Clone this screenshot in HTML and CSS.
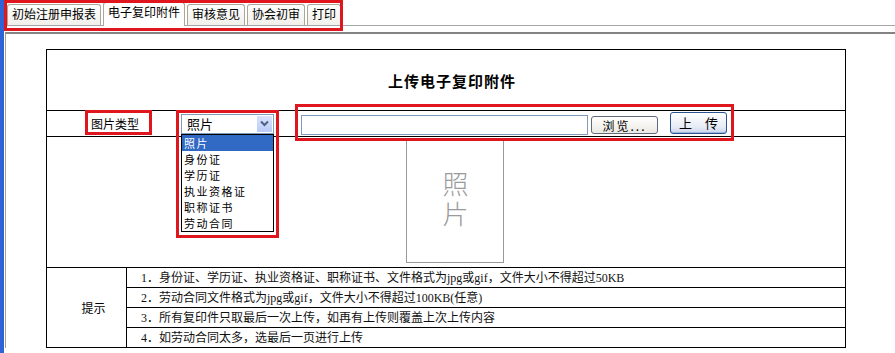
FILE: index.html
```html
<!DOCTYPE html>
<html lang="zh-CN">
<head>
    <meta charset="UTF-8">
    <title>上传电子复印附件</title>
    <link rel="stylesheet" href="styles.css">
</head>
<body>
    <div class="strip"></div>
    <div class="main">
        <div class="tabbar">
            <div class="tabs">
                <span class="tab">初始注册申报表</span>
                <span class="tab active">电子复印附件</span>
                <span class="tab">审核意见</span>
                <span class="tab">协会初审</span>
                <span class="tab">打印</span>
                <div class="mark mark-tabs"></div>
            </div>
        </div>
        <div class="gap"></div>
        <div class="frame">
            <table class="upload">
                <tr>
                    <td colspan="2" class="title">上传电子复印附件</td>
                </tr>
                <tr>
                    <td colspan="2" class="type-row">
                        <div class="type-line">
                            <span class="type-label">图片类型<span class="mark mark-label"></span></span>
                            <div class="sel-wrap">
                                <div class="sel">
                                    <span>照片</span>
                                    <span class="sel-btn">
                                        <svg width="9" height="7" viewBox="0 0 9 7"><path d="M1 1.5 L4.5 5 L8 1.5" fill="none" stroke="#4d6185" stroke-width="2"/></svg>
                                    </span>
                                </div>
                                <ul class="sel-list">
                                    <li class="picked">照片</li>
                                    <li>身份证</li>
                                    <li>学历证</li>
                                    <li>执业资格证</li>
                                    <li>职称证书</li>
                                    <li>劳动合同</li>
                                </ul>
                                <div class="mark mark-sel"></div>
                            </div>
                            <div class="file-group">
                                <span class="file-input"></span>
                                <span class="btn btn-browse">浏览...</span>
                                <span class="btn btn-upload">上　传</span>
                                <div class="mark mark-file"></div>
                            </div>
                        </div>
                    </td>
                </tr>
                <tr>
                    <td colspan="2" class="photo-cell">
                        <div class="photo"><span class="photo-text">照片</span></div>
                    </td>
                </tr>
                <tr>
                    <td rowspan="4" class="tip-head">提示</td>
                    <td class="tip">1．身份证、学历证、执业资格证、职称证书、文件格式为jpg或gif，文件大小不得超过50KB</td>
                </tr>
                <tr>
                    <td class="tip">2．劳动合同文件格式为jpg或gif，文件大小不得超过100KB(任意)</td>
                </tr>
                <tr>
                    <td class="tip">3．所有复印件只取最后一次上传，如再有上传则覆盖上次上传内容</td>
                </tr>
                <tr>
                    <td class="tip">4．如劳动合同太多，选最后一页进行上传</td>
                </tr>
            </table>
        </div>
    </div>
</body>
</html>
```

FILE: styles.css
```css
body {
    margin: 0;
    display: flex;
    min-height: 353px;
    font-family: "Liberation Serif", "Noto Sans CJK SC", serif;
    font-size: 12px;
    color: #000;
    background-color: #fff;
}
.strip {
    width: 4px;
    flex-shrink: 0;
    background-color: #2f64d6;
}
.main {
    flex: 1;
}
.tabbar {
    height: 25px;
    border-bottom: 1px solid #a7a6aa;
    padding-left: 3px;
    display: flex;
    align-items: flex-end;
}
.tabs {
    position: relative;
    display: flex;
    align-items: flex-end;
    gap: 2px;
    margin-bottom: -1px;
}
.tab {
    height: 20px;
    line-height: 17px;
    margin-bottom: 1px;
    padding: 0 4px;
    border: 1px solid #aca899;
    border-bottom: none;
    border-radius: 3px 3px 0 0;
    background: linear-gradient(#fefefe, #f1f0ea);
    font-family: "Noto Sans CJK SC", sans-serif;
    white-space: nowrap;
}
.tab.active {
    height: 23px;
    line-height: 18px;
    margin-bottom: 0;
    background: #fff;
}
.mark {
    position: absolute;
    border: 3px solid #e0161e;
    pointer-events: none;
    z-index: 2;
}
.mark-tabs {
    top: -2px;
    left: -3px;
    right: -2px;
    bottom: -5px;
}
.gap {
    height: 6px;
}
.frame {
    margin-left: 1px;
    border-top: 2px solid #848284;
    border-left: 1px solid #a0a0a0;
    padding: 15px 0 0 40px;
}
.upload {
    border-collapse: collapse;
    width: 800px;
}
.upload td {
    border: 1px solid #000;
    padding: 0;
}
.title {
    height: 60px;
    padding-left: 12px !important;
    text-align: center;
    font-family: "Noto Sans CJK SC", sans-serif;
    font-size: 15px;
    font-weight: bold;
    letter-spacing: 1px;
}
.type-row {
    height: 25px;
}
.type-line {
    display: flex;
    align-items: center;
    height: 25px;
    padding-left: 44px;
    font-family: "Noto Sans CJK SC", sans-serif;
}
.type-label {
    position: relative;
    width: 48px;
    line-height: 19px;
    white-space: nowrap;
}
.mark-label {
    top: -4px;
    left: -6px;
    right: -13px;
    bottom: -2px;
}
.sel-wrap {
    position: relative;
    margin-left: 42px;
}
.sel {
    width: 86px;
    height: 18px;
    padding-left: 5px;
    border: 1px solid #7f9db9;
    display: flex;
    align-items: center;
    justify-content: space-between;
    font-size: 13px;
    background-color: #fff;
}
.sel-btn {
    width: 15px;
    height: 16px;
    margin-right: 1px;
    display: flex;
    align-items: center;
    justify-content: center;
    background: linear-gradient(#d9e3fd, #b9cbf6);
}
.sel-list {
    position: absolute;
    top: 100%;
    left: 0;
    width: 91px;
    margin: 0;
    padding: 0;
    list-style: none;
    border: 1px solid #000;
    background-color: #fff;
    font-size: 11px;
    letter-spacing: 1.5px;
    z-index: 1;
}
.sel-list li {
    height: 16px;
    line-height: 16px;
    padding-left: 2px;
}
.sel-list li.picked {
    background-color: #316ac5;
    color: #fff;
}
.mark-sel {
    top: -4px;
    left: -5px;
    right: -5px;
    bottom: -104px;
}
.file-group {
    position: relative;
    display: flex;
    align-items: flex-start;
    height: 23px;
    margin-left: 27px;
}
.mark-file {
    top: -8px;
    left: -6px;
    right: -7px;
    bottom: -6px;
}
.file-input {
    width: 285px;
    height: 18px;
    margin-top: 3px;
    border: 1px solid #7f9db9;
    background-color: #fff;
}
.btn {
    display: flex;
    align-items: center;
    justify-content: center;
    box-sizing: border-box;
    border-radius: 3px;
    white-space: nowrap;
}
.btn-browse {
    width: 67px;
    height: 18px;
    margin: 4px 0 0 3px;
    border: 1px solid #5e6b7a;
    background: linear-gradient(#ffffff, #ebe9e2);
    letter-spacing: 2px;
}
.btn-upload {
    width: 57px;
    height: 22px;
    margin-left: 12px;
    padding-bottom: 2px;
    border: 1px solid #2a5390;
    background: linear-gradient(#ffffff, #e6ebf5 70%, #c9d5ee);
    box-shadow: inset 0 -1px 0 #9fb3db;
    font-size: 13px;
}
.photo-cell {
    height: 130px;
    vertical-align: top;
}
.photo {
    width: 96px;
    height: 123px;
    margin: 1px 0 0 359px;
    border: 1px solid #999;
    display: flex;
    align-items: center;
    justify-content: center;
}
.photo-text {
    writing-mode: vertical-rl;
    font-family: "Noto Sans CJK SC", sans-serif;
    font-size: 26px;
    font-weight: 300;
    letter-spacing: 4px;
    line-height: 30px;
    color: #9a9a9a;
}
.tip-head {
    width: 65px;
    padding-left: 14px !important;
    text-align: center;
    font-family: "Noto Sans CJK SC", sans-serif;
}
.tip {
    height: 19px;
    padding-left: 14px !important;
    line-height: 18px;
    color: #111;
}
```
